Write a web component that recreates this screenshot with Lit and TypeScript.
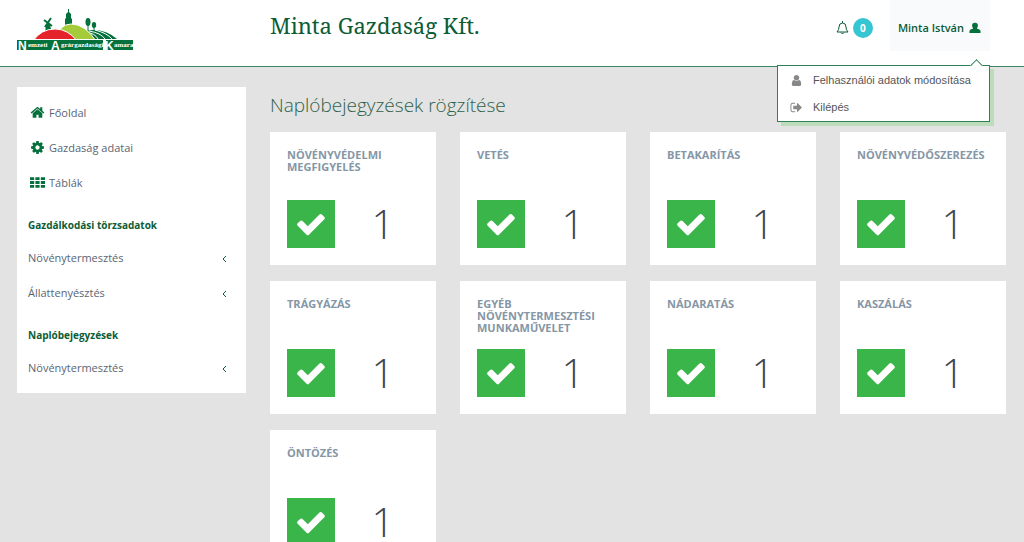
import { LitElement, html, css, svg } from "lit";
import { customElement, property } from "lit/decorators.js";

const paths: Record<string, string> = {
  check: "M1671 566q0 40-28 68l-724 724-136 136q-28 28-68 28t-68-28l-136-136-362-362q-28-28-28-68t28-68l136-136q28-28 68-28t68 28l294 295 656-657q28-28 68-28t68 28l136 136q28 28 28 68z",
  home: "M1472 992v480q0 26-19 45t-45 19h-384v-384h-256v384h-384q-26 0-45-19t-19-45v-480q0-1 .5-3t.5-3l575-474 575 474q1 2 1 6zm223-69l-62 74q-8 9-21 11h-3q-13 0-21-7l-692-577-692 577q-12 8-24 7-13-2-21-11l-62-74q-8-10-7-23.5t11-21.5l719-599q32-26 76-26t76 26l244 204v-195q0-14 9-23t23-9h192q14 0 23 9t9 23v408l219 182q10 8 11 21.5t-7 23.5z",
  cog: "M1152 896q0-106-75-181t-181-75-181 75-75 181 75 181 181 75 181-75 75-181zm512-109v222q0 12-8 23t-20 13l-185 28q-19 54-39 91 35 50 107 138 10 12 10 25t-9 23q-27 37-99 108t-94 71q-12 0-26-9l-138-108q-44 23-91 38-16 136-29 186-7 28-36 28h-222q-14 0-24.5-8.5t-11.5-21.5l-28-184q-49-16-90-37l-141 107q-10 9-25 9-14 0-25-11-126-114-165-168-7-10-7-23 0-12 8-23 15-21 51-66.5t54-70.5q-27-50-41-99l-183-27q-13-2-21-12.5t-8-23.5v-222q0-12 8-23t19-13l186-28q14-46 39-92-40-57-107-138-10-12-10-24 0-10 9-23 26-36 98.5-107.5t94.5-71.5q13 0 26 10l138 107q44-23 91-38 16-136 29-186 7-28 36-28h222q14 0 24.5 8.5t11.5 21.5l28 184q49 16 90 37l142-107q9-9 24-9 13 0 25 10 129 119 165 170 7 8 7 22 0 12-8 23-15 21-51 66.5t-54 70.5q26 50 41 98l183 28q13 2 21 12.5t8 23.5z",
  grid: "M0 256h500v340H0zM646 256h500v340H646zM1292 256h500v340h-500zM0 726h500v340H0zM646 726h500v340H646zM1292 726h500v340h-500zM0 1196h500v340H0zM646 1196h500v340H646zM1292 1196h500v340h-500z",
  user: "M1536 1399q0 109-62.5 187t-150.5 78h-854q-88 0-150.5-78t-62.5-187q0-85 8.5-160.5t31.5-152 58.5-131 94-89 134.5-34.5q131 128 313 128t313-128q76 0 134.5 34.5t94 89 58.5 131 31.5 152 8.5 160.5zm-256-887q0 159-112.5 271.5t-271.5 112.5-271.5-112.5-112.5-271.5 112.5-271.5 271.5-112.5 271.5 112.5 112.5 271.5z",
  person: "M896 100q220 0 330 130t110 340q-20 190-140 310v80q40 50 180 90l220 90q130 70 130 250v260H66v-260q0-180 130-250l220-90q140-40 180-90v-80q-120-120-140-310 0-210 110-340t330-130z",
  exit: "M704 1440q0 4 1 20t.5 26.5-3 23.5-10 19.5-20.5 6.5h-320q-119 0-203.5-84.5t-84.5-203.5v-704q0-119 84.5-203.5t203.5-84.5h320q13 0 22.5 9.5t9.5 22.5q0 4 1 20t.5 26.5-3 23.5-10 19.5-20.5 6.5h-320q-66 0-113 47t-47 113v704q0 66 47 113t113 47h312l11.5 1 11.5 3 8 5.5 7 9 2 13.5zm928-544q0 26-19 45l-544 544q-19 19-45 19t-45-19-19-45v-288h-448q-26 0-45-19t-19-45v-384q0-26 19-45t45-19h448v-288q0-26 19-45t45-19 45 19l544 544q19 19 19 45z",
};

@customElement("app-icon")
class AppIcon extends LitElement {
  @property() name = "";
  static styles = css`
    :host { display: inline-block; width: 16px; height: 16px; flex: none; }
    svg { display: block; width: 100%; height: 100%; fill: currentColor; }
  `;
  render() {
    return html`<svg viewBox="0 0 1792 1792" aria-hidden="true"><path d=${paths[this.name]}></path></svg>`;
  }
}

@customElement("chamber-logo")
class ChamberLogo extends LitElement {
  static styles = css`
    :host { display: block; }
    svg { display: block; }
    text { font-family: "Liberation Serif", serif; font-weight: 700; fill: #fff; }
    .small { font-size: 7px; }
    .cap { font-size: 12px; font-family: "Liberation Sans", sans-serif; }
  `;
  render() {
    return html`<svg width="118" height="48" viewBox="0 0 118 48" role="img" aria-label="Nemzeti Agrárgazdasági Kamara">
      ${svg`
      <path fill="#04703c" d="M28 25L29 17Q31 14 33 17L35 25zM48 20v-9l1-1V6l2-2V1h1v3l2 2v4l1 1v9z"/>
      <path stroke="#04703c" stroke-width="2" fill="none" d="M27 12l8 6M34 10l-6 9"/>
      <path fill="#04703c" d="M64 31Q64 22 76 22Q90 22 100 31z"/>
      <path stroke="#fff" stroke-width="1" fill="none" d="M68 24Q78 25 81 31M72 23Q84 25 88 31M78 22Q90 25 95 31"/>
      <ellipse cx="71" cy="14" rx="2.5" ry="4" fill="#04703c"/><ellipse cx="77" cy="17" rx="2.2" ry="3" fill="#04703c"/>
      <path stroke="#04703c" d="M71 16v7M77 19v4"/>
      <path fill="#a4cb39" stroke="#fff" stroke-width="1" d="M38 33Q42 16 54 16Q68 16 79 33z"/>
      <path fill="#e4232b" stroke="#fff" stroke-width="1" d="M16 33Q24 21 38 21Q51 21 60 33z"/>
      <path fill="#04703c" d="M0 32H86V42H0zM89 32H116V42H89z"/>
      <path fill="#fff" d="M0 31h118v1H0z"/>
      <text class="cap" x="1" y="42">N</text><text class="small" x="11" y="39">emzeti</text>
      <text class="cap" x="34" y="42">A</text><text class="small" x="44" y="39">grárgazdasági</text>
      <text class="cap" x="88" y="42">K</text><text class="small" x="97" y="39">amara</text>`}
    </svg>`;
  }
}

@customElement("log-card")
class LogCard extends LitElement {
  @property() heading = "";
  @property({ type: Number }) count = 0;
  static styles = css`
    :host { display: block; background: #fff; padding: 17px; }
    .title { margin: 0; height: 51px; font-size: 11px; line-height: 12px; font-weight: 700; color: #8596a6; }
    .row { display: flex; align-items: center; height: 48px; }
    .tick { display: grid; place-items: center; width: 48px; height: 48px; background: #3ab54a; color: #fff; }
    .tick app-icon { width: 32px; height: 32px; }
    .count { flex: 1; padding-left: 12px; text-align: center; font-size: 40px; line-height: 48px; font-weight: 300; color: #3f444f; }
  `;
  render() {
    return html`<h3 class="title">${this.heading}</h3>
      <div class="row"><span class="tick"><app-icon name="check"></app-icon></span><span class="count">${this.count}</span></div>`;
  }
}

const cards = [
  "NÖVÉNYVÉDELMI MEGFIGYELÉS", "VETÉS", "BETAKARÍTÁS", "NÖVÉNYVÉDŐSZEREZÉS",
  "TRÁGYÁZÁS", "EGYÉB NÖVÉNYTERMESZTÉSI MUNKAMŰVELET", "NÁDARATÁS", "KASZÁLÁS", "ÖNTÖZÉS",
];

@customElement("app-root")
class AppRoot extends LitElement {
  static styles = css`
    :host { display: block; min-height: 100vh; background: #e3e3e3; font-family: "Open Sans", sans-serif; font-size: 11px; color: #5b6572; }
    * { box-sizing: border-box; }
    a { color: inherit; text-decoration: none; }
    header { display: grid; grid-template-columns: 253px 1fr auto; height: 67px; padding: 0 34px 0 17px; background: #fff; border-bottom: 1px solid #3c8661; }
    .logo { padding-top: 8px; }
    .farm { margin: 0; padding-top: 9px; font-family: "Droid Serif", "Noto Serif", "DejaVu Serif Condensed", "DejaVu Serif", serif; font-size: 22px; line-height: 32px; font-weight: 400; color: #0c5c36; }
    .tools { display: flex; align-items: flex-start; position: relative; }
    button { border: 0; background: none; font: inherit; color: #0c5c36; cursor: pointer; }
    .alerts { display: flex; align-items: center; gap: 4px; height: 56px; padding: 0; margin-right: 17px; }
    .badge { display: grid; place-items: center; width: 20px; height: 20px; border-radius: 50%; background: #36c6d3; color: #fff; font-size: 10px; font-weight: 700; }
    .user { display: flex; align-items: center; gap: 5px; height: 51px; padding: 4px 9px 0 8px; background: #f9fafc; font-weight: 600; }
    .user app-icon { width: 12px; height: 12px; color: #04703c; }
    .menu { position: absolute; z-index: 2; right: 0; top: 65px; width: 213px; margin: 0; padding: 1px 0 0; list-style: none; background: #fff; border: 1px solid #2e8155; box-shadow: 4px 4px 0 #bcdcbc; font: 11px/27px "Liberation Sans", sans-serif; color: #555; }
    .menu::before { content: ""; position: absolute; right: 8px; top: -5px; width: 8px; height: 8px; background: #fff; border: solid #2e8155; border-width: 1px 0 0 1px; transform: rotate(45deg); }
    .menu a { display: flex; align-items: center; gap: 10px; padding-left: 12px; white-space: nowrap; }
    .menu app-icon { width: 13px; height: 13px; color: #888; }
    .page { display: grid; grid-template-columns: 229px minmax(0, 1fr); gap: 24px; align-items: start; padding: 20px 18px 20px 17px; }
    nav { background: #fff; padding: 8px 11px; }
    nav ul { list-style: none; margin: 0; padding: 0; }
    nav a { display: flex; align-items: center; height: 35px; }
    nav .main app-icon { margin: 0 4px 0 2px; width: 15px; height: 15px; color: #04703c; }
    nav h2 { margin: 0; padding-top: 15px; font-size: 10px; line-height: 20px; font-weight: 700; color: #0c5c36; height: 40px; }
    .chev { width: 6px; height: 8px; margin: 3px 8px 0 auto; fill: none; stroke: #0c5c36; stroke-width: 1; }
    .title { margin: 0 0 13px; font-size: 19px; line-height: 32px; padding-top: 2px; height: 32px; font-weight: 300; color: #2e6149; }
    .cards { display: grid; grid-template-columns: repeat(4, minmax(0, 1fr)); gap: 16px 24px; }
  `;
  item(label: string) {
    return html`<li><a href="#">${label}<svg class="chev" viewBox="0 0 6 8"><path d="M5 1L2 4L5 7"></path></svg></a></li>`;
  }
  render() {
    return html`
      <header>
        <a class="logo" href="#"><chamber-logo></chamber-logo></a>
        <h1 class="farm">Minta Gazdaság Kft.</h1>
        <div class="tools">
          <button class="alerts" aria-label="Értesítések">
            <svg width="13" height="14" viewBox="0 0 13 14" fill="none" stroke="#0c5c36"><path d="M1 11Q3 9 3 6Q3 2 6.500 2Q10 2 10 6Q10 9 12 11zM5 11.500Q6.500 14.500 8 11.500M6.500 0v2"></path></svg>
            <span class="badge">0</span>
          </button>
          <button class="user">Minta István<app-icon name="person"></app-icon></button>
          <ul class="menu">
            <li><a href="#"><app-icon name="user"></app-icon>Felhasználói adatok módosítása</a></li>
            <li><a href="#"><app-icon name="exit"></app-icon>Kilépés</a></li>
          </ul>
        </div>
      </header>
      <div class="page">
        <nav>
          <ul class="main">
            <li><a href="#"><app-icon name="home"></app-icon>Főoldal</a></li>
            <li><a href="#"><app-icon name="cog"></app-icon>Gazdaság adatai</a></li>
            <li><a href="#"><app-icon name="grid"></app-icon>Táblák</a></li>
          </ul>
          <h2>Gazdálkodási törzsadatok</h2>
          <ul>${this.item("Növénytermesztés")}${this.item("Állattenyésztés")}</ul>
          <h2>Naplóbejegyzések</h2>
          <ul>${this.item("Növénytermesztés")}</ul>
        </nav>
        <main>
          <h2 class="title">Naplóbejegyzések rögzítése</h2>
          <div class="cards">${cards.map((c) => html`<log-card heading=${c} count="1"></log-card>`)}</div>
        </main>
      </div>`;
  }
}
